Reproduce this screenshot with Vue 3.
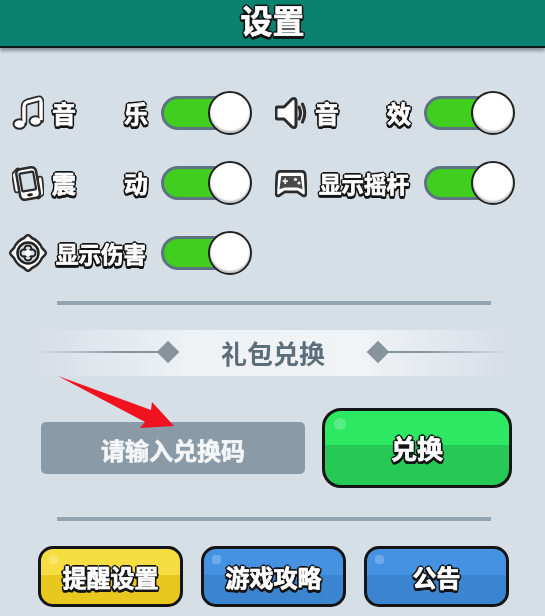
<script setup>
const bottomButtons = [
  { text: '提醒设置', tone: 'yellow' },
  { text: '游戏攻略', tone: 'blue' },
  { text: '公告', tone: 'blue' }
]
</script>

<template>
  <div class="page">
    <header class="header"><h1 class="outlined header-title">设置</h1></header>

    <section class="settings">
      <div class="setting">
        <svg class="icon" viewBox="0 0 32 36">
          <g fill="none" stroke-linejoin="round" stroke-linecap="round">
            <path class="ol" d="M12 28V12Q12 8 15 7L26 4Q29 3 29 7V25" />
            <path class="wh" d="M12 28V12Q12 8 15 7L26 4Q29 3 29 7V25" />
          </g>
          <ellipse class="head" cx="7.500" cy="29" rx="6" ry="4.800" />
          <ellipse class="head" cx="23.500" cy="26" rx="6" ry="4.800" />
          <path d="M12 28V12M29 25V7" stroke="#fff" stroke-width="3" fill="none" />
        </svg>
        <div class="outlined label spread"><span>音</span><span>乐</span></div>
        <div class="toggle"><span class="track"></span><span class="knob"></span></div>
      </div>

      <div class="setting">
        <svg class="icon" viewBox="0 0 32 36">
          <g fill="none" stroke-linecap="round" stroke-linejoin="round">
            <path class="ol" d="M6 6 2.500 10 5 25M26 31l3.500-3L28 14" />
            <path class="wh" d="M6 6 2.500 10 5 25M26 31l3.500-3L28 14" />
          </g>
          <g transform="rotate(-10 16 18)">
            <rect class="case" x="6" y="3" width="20" height="31" rx="4.500" />
            <rect class="screen" x="9" y="7.500" width="14" height="18" rx="1" />
            <ellipse cx="16" cy="30" rx="3" ry="1.500" fill="#222" />
          </g>
        </svg>
        <div class="outlined label spread"><span>震</span><span>动</span></div>
        <div class="toggle"><span class="track"></span><span class="knob"></span></div>
      </div>

      <div class="setting">
        <svg class="icon wide" viewBox="0 0 38 38">
          <path class="case" d="M19 1Q20 1 23 4Q30 7 33 14Q37 18 37 19Q37 20 33 24Q30 31 23 34Q20 37 19 37Q18 37 15 34Q8 31 5 24Q1 20 1 19Q1 18 5 14Q8 7 15 4Q18 1 19 1Z" />
          <circle cx="19" cy="19" r="10.500" fill="#d6dee6" stroke="#222" stroke-width="2.500" />
          <g fill="#d6dee6" stroke="#222" stroke-width="2">
            <circle cx="19" cy="15" r="3.500" />
            <circle cx="19" cy="23" r="3.500" />
            <circle cx="15" cy="19" r="3.500" />
            <circle cx="23" cy="19" r="3.500" />
          </g>
          <circle cx="19" cy="19" r="3.200" fill="#fff" />
        </svg>
        <div class="outlined label tight">显示伤害</div>
        <div class="toggle"><span class="track"></span><span class="knob"></span></div>
      </div>

      <div class="setting second-col first-row">
        <svg class="icon" viewBox="0 0 32 36">
          <path class="case thick" d="M3 12H9L17 4Q21 2 21 7V29Q21 34 17 32L9 24H3Q1 24 1 22V14Q1 12 3 12Z" />
          <path d="M24 12Q27 18 24 24" fill="none" stroke="#2b2b2b" stroke-width="3" stroke-linecap="round" />
          <path d="M27.500 9Q32 18 27.500 27" fill="none" stroke="#2b2b2b" stroke-width="3" stroke-linecap="round" />
        </svg>
        <div class="outlined label spread"><span>音</span><span>效</span></div>
        <div class="toggle"><span class="track"></span><span class="knob"></span></div>
      </div>

      <div class="setting second-col second-row">
        <svg class="icon" viewBox="0 0 36 36">
          <path class="case thick" d="M6 5H30Q34 5 34 10L35 28Q35 34 31 32L25 28H11L5 32Q1 34 1 28L2 10Q2 5 6 5Z" />
          <path d="M7 10H29L31 25 25 23H11L5 25Z" fill="#4a4a4a" />
          <circle cx="23" cy="14" r="1.800" fill="#eee" />
          <circle cx="27" cy="18" r="1.800" fill="#eee" />
          <path d="M8.500 16h6M11.500 13v6" stroke="#eee" stroke-width="2" />
        </svg>
        <div class="outlined label tight">显示摇杆</div>
        <div class="toggle"><span class="track"></span><span class="knob"></span></div>
      </div>
    </section>

    <div class="divider first-divider"></div>

    <div class="banner">
      <span class="rule rule-left"></span>
      <span class="diamond"></span>
      <h2 class="banner-title">礼包兑换</h2>
      <span class="diamond"></span>
      <span class="rule rule-right"></span>
    </div>

    <div class="redeem">
      <div class="code-input">请输入兑换码</div>
      <button class="game-btn green big"><span class="outlined btn-text big-text">兑换</span></button>
      <svg class="arrow" viewBox="0 0 120 56">
        <path d="M1 1 L94 35 L95 27 L117 51 L83 53 L88 47 Z" fill="#f0121e" />
      </svg>
    </div>

    <div class="divider second-divider"></div>

    <div class="actions">
      <button v-for="b in bottomButtons" :key="b.text" class="game-btn small" :class="b.tone">
        <span class="outlined btn-text">{{ b.text }}</span>
      </button>
    </div>
  </div>
</template>

<style scoped>
.page {
  position: relative;
  width: 545px;
  height: 616px;
  overflow: hidden;
  background: #d6dee6;
  font-family: "Noto Sans CJK SC", "Noto Sans", sans-serif;
  filter: blur(0.45px);
}
.header {
  height: 46px;
  background: #0b816f;
  border-bottom: 2px solid #10181a;
  box-shadow: 0 3px 3px rgba(90, 100, 110, 0.6);
  display: flex;
  align-items: center;
  justify-content: center;
}
.outlined {
  color: #fff;
  font-weight: 700;
  -webkit-text-stroke: 0.7px #fff;
  text-shadow:
    2px 0 0 #151515, -2px 0 0 #151515, 0 -2px 0 #151515, 0 2px 0 #151515,
    1.500px 1.500px 0 #151515, -1.500px 1.500px 0 #151515,
    1.500px -1.500px 0 #151515, -1.500px -1.500px 0 #151515,
    0 3px 0 #151515, 1px 3px 0 #151515, -1px 3px 0 #151515;
}
.header-title {
  margin: 0 0 8px;
  font-size: 32px;
  line-height: 38px;
}
.settings {
  display: grid;
  grid-template-columns: 263px 1fr;
  grid-auto-rows: 70px;
  padding: 30px 0 0 12px;
}
.setting {
  display: flex;
  align-items: center;
  grid-column: 1;
}
.second-col { grid-column: 2; }
.first-row { grid-row: 1; }
.second-row { grid-row: 2; }
.icon {
  width: 32px;
  height: 36px;
  margin-right: 8px;
  flex: none;
}
.icon.wide {
  width: 38px;
  height: 38px;
  margin: 0 5px 0 -3px;
}
.ol { stroke: #2b2b2b; stroke-width: 6.500; }
.wh { stroke: #fff; stroke-width: 3; }
.head { fill: #fff; stroke: #2b2b2b; stroke-width: 2; }
.case { fill: #fff; stroke: #2b2b2b; stroke-width: 2.500; stroke-linejoin: round; }
.thick { stroke-width: 3; }
.screen { fill: #d6dee6; stroke: #2b2b2b; stroke-width: 2.200; }
.label {
  box-sizing: border-box;
  width: 96px;
  margin-right: 13px;
  font-size: 24px;
  line-height: 30px;
  flex: none;
}
.spread {
  display: flex;
  justify-content: space-between;
}
.tight {
  padding-left: 2px;
  font-size: 22.500px;
  text-align: center;
  white-space: nowrap;
}
.toggle {
  position: relative;
  width: 91px;
  height: 44px;
  display: flex;
  align-items: center;
  flex: none;
}
.track {
  width: 70px;
  height: 34px;
  box-sizing: border-box;
  border: 3px solid #5e7282;
  border-radius: 17px;
  background: #40cf1f;
}
.knob {
  position: absolute;
  right: 0;
  top: 0;
  width: 44px;
  height: 44px;
  box-sizing: border-box;
  border: 2.500px solid #222;
  border-radius: 50%;
  background: #fff;
  box-shadow: inset 0 -2px 2px #b9bdc2;
}
.divider {
  width: 434px;
  height: 4px;
  margin-left: 57px;
  background: #93a5ae;
}
.first-divider { margin-top: 13px; }
.second-divider { margin-top: 29px; }
.banner {
  display: flex;
  align-items: center;
  width: 475px;
  height: 46px;
  margin: 25px 0 0 35px;
  background: linear-gradient(90deg, rgba(238, 242, 245, 0) 0%, #eef2f5 32%, #f1f4f6 68%, rgba(238, 242, 245, 0) 100%);
}
.rule {
  height: 2px;
  margin-top: -3px;
}
.rule-left {
  width: 124px;
  margin-right: -2px;
  background: linear-gradient(90deg, rgba(135, 148, 156, 0), #87949c 70%);
}
.rule-right {
  flex: 1;
  margin-left: -2px;
  background: linear-gradient(90deg, #87949c 30%, rgba(135, 148, 156, 0));
}
.diamond {
  width: 16px;
  height: 16px;
  margin: -3px 3px 0;
  background: #87949c;
  transform: rotate(45deg);
  flex: none;
}
.banner-title {
  width: 150px;
  margin: 0 19px;
  color: #5d6e7b;
  font-size: 26px;
  font-weight: 700;
  line-height: 46px;
  text-align: center;
  flex: none;
}
.redeem {
  position: relative;
  display: flex;
  align-items: center;
  gap: 17px;
  margin: 32px 0 0 41px;
}
.code-input {
  width: 264px;
  height: 52px;
  border-radius: 5px;
  background: #8a9aa6;
  color: #f4f6f8;
  font-size: 24px;
  font-weight: 700;
  -webkit-text-stroke: 0.6px #f4f6f8;
  line-height: 56px;
  text-align: center;
}
.arrow {
  position: absolute;
  left: 16px;
  top: -33px;
  width: 120px;
  height: 56px;
}
.game-btn {
  position: relative;
  box-sizing: border-box;
  padding: 0;
  border: 3px solid #141414;
  border-radius: 15px;
  font-family: inherit;
  cursor: pointer;
  display: flex;
  align-items: center;
  justify-content: center;
}
.game-btn::before {
  content: "";
  position: absolute;
  left: 8px;
  top: 6px;
  width: 9px;
  height: 9px;
  border-radius: 3px;
  background: rgba(255, 255, 255, 0.22);
}
.big { width: 190px; height: 80px; border-radius: 19px; }
.big::before { left: 9px; top: 7px; width: 12px; height: 12px; border-radius: 50%; }
.small { width: 145px; height: 61px; }
.green { background: linear-gradient(#2de863 0 46%, #26c956 46%); }
.yellow { background: linear-gradient(#f6dd42 0 48%, #e8c81f 48%); }
.blue { background: linear-gradient(#4592e3 0 48%, #3a84d0 48%); }
.btn-text {
  font-size: 24px;
  line-height: 30px;
}
.big-text { font-size: 26px; }
.actions {
  display: flex;
  gap: 18px;
  margin: 25px 0 0 38px;
}
</style>
